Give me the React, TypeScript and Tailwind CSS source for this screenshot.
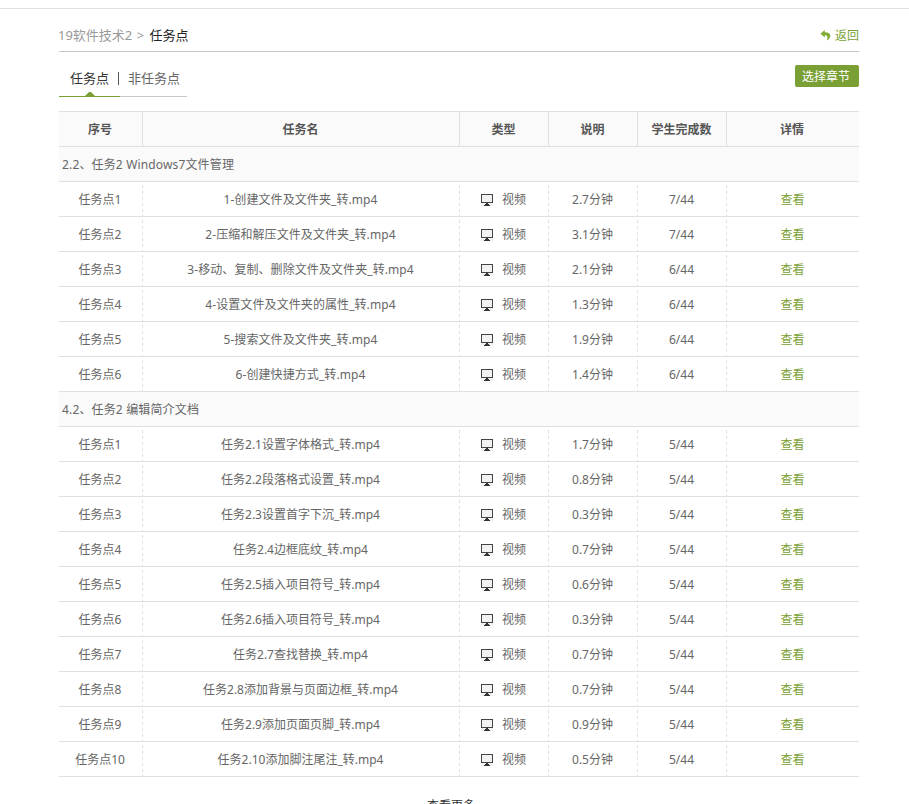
import React from "react";

type Task = { name: string; duration: string; done: string };
type Section = { title: string; nameClass: string; tasks: Task[] };

const sections: Section[] = [
  {
    title: "2.2、任务2 Windows7文件管理",
    nameClass: "tracking-[0.08px]",
    tasks: [
      { name: "1-创建文件及文件夹_转.mp4", duration: "2.7分钟", done: "7/44" },
      { name: "2-压缩和解压文件及文件夹_转.mp4", duration: "3.1分钟", done: "7/44" },
      { name: "3-移动、复制、删除文件及文件夹_转.mp4", duration: "2.1分钟", done: "6/44" },
      { name: "4-设置文件及文件夹的属性_转.mp4", duration: "1.3分钟", done: "6/44" },
      { name: "5-搜索文件及文件夹_转.mp4", duration: "1.9分钟", done: "6/44" },
      { name: "6-创建快捷方式_转.mp4", duration: "1.4分钟", done: "6/44" },
    ],
  },
  {
    title: "4.2、任务2 编辑简介文档",
    nameClass: "tracking-normal",
    tasks: [
      { name: "任务2.1设置字体格式_转.mp4", duration: "1.7分钟", done: "5/44" },
      { name: "任务2.2段落格式设置_转.mp4", duration: "0.8分钟", done: "5/44" },
      { name: "任务2.3设置首字下沉_转.mp4", duration: "0.3分钟", done: "5/44" },
      { name: "任务2.4边框底纹_转.mp4", duration: "0.7分钟", done: "5/44" },
      { name: "任务2.5插入项目符号_转.mp4", duration: "0.6分钟", done: "5/44" },
      { name: "任务2.6插入项目符号_转.mp4", duration: "0.3分钟", done: "5/44" },
      { name: "任务2.7查找替换_转.mp4", duration: "0.7分钟", done: "5/44" },
      { name: "任务2.8添加背景与页面边框_转.mp4", duration: "0.7分钟", done: "5/44" },
      { name: "任务2.9添加页面页脚_转.mp4", duration: "0.9分钟", done: "5/44" },
      { name: "任务2.10添加脚注尾注_转.mp4", duration: "0.5分钟", done: "5/44" },
    ],
  },
];

const columns = ["序号", "任务名", "类型", "说明", "学生完成数", "详情"];
const grid = "grid grid-cols-[84px_317px_89px_89px_89px_132px]";

function Monitor() {
  return (
    <svg width="12" height="12" viewBox="0 0 12 12" shapeRendering="crispEdges" className="mr-[9px] shrink-0">
      <rect width="12" height="12" fill="#f1f2f4" />
      <path d="M0.5 0.5h11v8h-11z" fill="none" stroke="#444" />
      <path d="M5 9h2v1h1v1h1v1H3v-1h1v-1h1z" fill="#333" />
    </svg>
  );
}

function Cell({ children }: { children: React.ReactNode }) {
  return (
    <div className="flex h-[34px] items-center justify-center bg-[repeating-linear-gradient(to_bottom,#e0e0e0_0px,#e0e0e0_3px,transparent_3px,transparent_6px)] bg-[length:1px_31px] bg-[position:right_bottom] bg-no-repeat pt-[2px] pr-[2px]">
      {children}
    </div>
  );
}

export default function App() {
  return (
    <div className="h-[804px] overflow-hidden bg-white pt-2 font-['Noto_Sans','Noto_Sans_CJK_SC',sans-serif] text-[12px] leading-[18px] text-[#666]">
      <div className="h-px bg-[#e1e1e1]" />
      <main className="ml-[59px] w-[800px]">
        <header className="flex h-[43px] items-center justify-between border-b border-[#c9c9c9] pt-[9px]">
          <div className="-ml-px text-[13px] text-[#999]">
            19软件技术2 <span className="mr-[2px] ml-px">&gt;</span> <span className="text-[#222]">任务点</span>
          </div>
          <a className="flex items-center gap-1 pt-[2px] text-[#7a9f35]">
            <svg width="11" height="11" viewBox="0 0 10 11" className="-mt-px">
              <path d="M4.3 0L0 3.8l4.3 3.7V5.3C6.8 5.3 7.8 6.8 6.3 10.6C9 9 10 7 9.8 5.4C9.6 3.2 7.4 2.2 4.3 2.2z" fill="#7fae32" />
            </svg>
            返回
          </a>
        </header>
        <div className="flex h-[59px] justify-between">
          <nav className="relative flex h-[45px] w-[128px] items-center border-b border-[#c9c9c9] pl-[11px] pt-[7px] text-[13px]">
            <span className="text-[#333]">任务点</span>
            <span className="mx-auto mt-[2px] h-[13px] w-px bg-[#555]" />
            <span className="pr-[7px]">非任务点</span>
            <svg className="absolute -bottom-px left-0" width="61" height="5" viewBox="0 0 61 5">
              <path d="M0 4h61v1H0zM26 4l4-4h2l4 4z" fill="#7a9f35" />
            </svg>
          </nav>
          <button className="mt-[13px] flex h-[22px] w-[64px] items-center justify-center rounded-[2px] bg-[#7a9f35] pt-[2px] pr-[2px] text-white">选择章节</button>
        </div>
        <section>
          <div className={`${grid} h-9 border-y border-[#e0e0e0] bg-[#fafafa] font-bold text-[#555]`}>
            {columns.map((c) => (
              <div key={c} className="flex items-center justify-center border-r border-[#e0e0e0] pt-[2px] pr-px last:border-r-0 last:pr-[2px]">{c}</div>
            ))}
          </div>
          {sections.map((s) => (
            <div key={s.title}>
              <div className="flex h-[35px] items-center border-b border-[#e0e0e0] bg-[#fafafa] pl-[3px] pt-[2px] tracking-[0.15px]">{s.title}</div>
              {s.tasks.map((t, i) => (
                <div key={t.name} className={`${grid} h-[35px] border-b border-[#e0e0e0]`}>
                  <Cell>任务点{i + 1}</Cell>
                  <Cell><span className={s.nameClass}>{t.name}</span></Cell>
                  <Cell><Monitor />视频</Cell>
                  <Cell>{t.duration}</Cell>
                  <Cell>{t.done}</Cell>
                  <div className="flex items-center justify-center pt-[2px] pr-px text-[#7a9f35]">查看</div>
                </div>
              ))}
            </div>
          ))}
        </section>
        <div className="mt-[20px] pr-[16px] text-center text-[#333]">查看更多</div>
      </main>
    </div>
  );
}
